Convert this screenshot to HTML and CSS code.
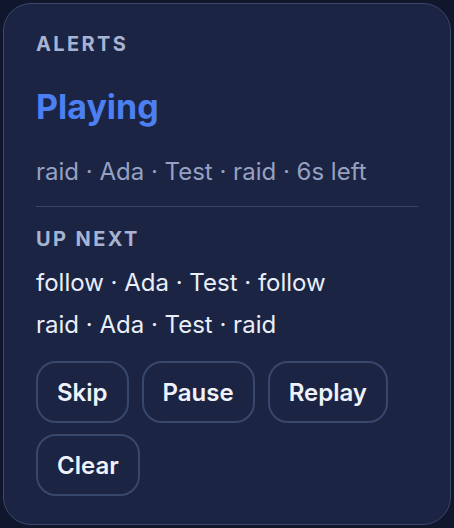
FILE: index.html
```html
<!DOCTYPE html>
<html>
<head>
<meta charset="utf-8">
<link rel="stylesheet" href="styles.css">
</head>
<body>
<section class="card">
  <div class="label">ALERTS</div>
  <div class="status">Playing</div>
  <div class="meta">raid · Ada · Test · raid · 6s left</div>
  <hr class="divider">
  <div class="label next">UP NEXT</div>
  <ul class="queue">
    <li>follow · Ada · Test · follow</li>
    <li>raid · Ada · Test · raid</li>
  </ul>
  <div class="actions">
    <button class="btn">Skip</button>
    <button class="btn">Pause</button>
    <button class="btn">Replay</button>
    <button class="btn">Clear</button>
  </div>
</section>
</body>
</html>
```
FILE: styles.css
```css
html, body {
  margin: 0;
  padding: 0;
  background: #10162b;
}
body {
  padding: 3px;
  font-family: Inter, "Noto Sans", sans-serif;
}
.card {
  box-sizing: border-box;
  width: 448px;
  height: 522px;
  border: 1px solid #3a4869;
  border-radius: 28px;
  background: #1c2443;
  padding: 28px 32px;
  display: flex;
  flex-direction: column;
}
.label {
  font-size: 20px;
  font-weight: 700;
  letter-spacing: 0.12em;
  color: #a6b3d3;
  line-height: 24px;
}
.status {
  margin-top: 31px;
  font-size: 34px;
  font-weight: 700;
  color: #4b7ff2;
  line-height: 40px;
}
.meta {
  margin-top: 30px;
  font-size: 24px;
  color: #95a1c2;
  line-height: 30px;
}
.divider {
  margin: 19px 0 0;
  border: 0;
  height: 2px;
  background: #37456a;
}
.next {
  margin-top: 20px;
}
.queue {
  list-style: none;
  margin: 17px 0 0;
  padding: 0;
  display: flex;
  flex-direction: column;
  gap: 12px;
}
.queue li {
  font-size: 24px;
  color: #e9eef8;
  line-height: 30px;
}
.actions {
  margin-top: 21px;
  display: flex;
  flex-wrap: wrap;
  gap: 11px 13px;
}
.btn {
  font-family: Inter, "Noto Sans", sans-serif;
  font-size: 24px;
  font-weight: 600;
  color: #eef2fa;
  background: transparent;
  border: 2px solid #38476c;
  border-radius: 20px;
  padding: 0 19px;
  height: 62px;
}
```
